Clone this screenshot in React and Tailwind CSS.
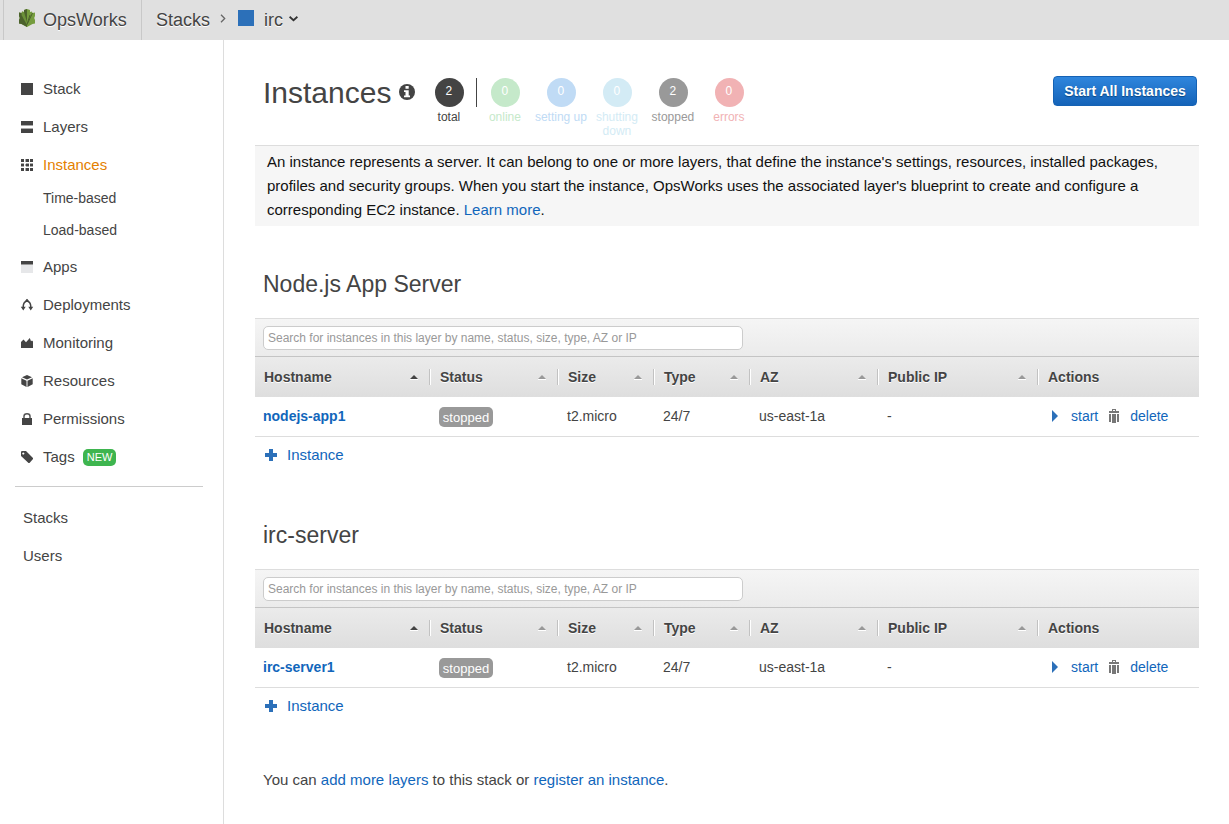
import React from "react";

function Leaf() {
  return (
    <svg className="block h-[18px] w-[16px]" viewBox="0 0 16 18">
      <path
        d="M8 0 5 1v2L3 2.500 2.500 4 0 3.500V7l.8 2L0 11v3.500l2.500.5L8 18l5.500-3 2.500-.5V11l-.8-2L16 7V3.500L13.500 4 13 2.500 11 3V1z"
        fill="#759c3e"
      />
      <path d="M8 0 5 1v8l3 6zM0 3.500 2.500 4 8 15v3L2.500 15 0 14.500V11l.8-2L0 7z" fill="#4b612c" />
      <path d="M3 2.500 5 3l3 10v3L2.500 6z" fill="#6b9139" />
      <path d="M13.500 4 8 15.500 11 6" fill="none" stroke="#4b612c" strokeWidth="1" />
    </svg>
  );
}

function Icon({ children }) {
  return (
    <svg className="block size-3 shrink-0 overflow-visible" viewBox="0 0 12 12" fill="#444">
      {children}
    </svg>
  );
}

const icons = {
  stack: <rect width="12" height="12" />,
  layers: (
    <>
      <rect width="12" height="4" />
      <rect y="4" width="12" height="1" fill="#aaa" />
      <rect y="7" width="12" height="1" fill="#aaa" />
      <rect y="8" width="12" height="4" />
    </>
  ),
  instances: (
    <>
      <path d="M0 0h3v3H0zM5 0h3v3H5zM9 0h3v3H9zM0 5h3v2H0zM5 5h3v2H5zM9 5h3v2H9zM0 9h3v3H0zM5 9h3v3H5zM9 9h3v3H9z" />
      <path d="M0 4h3v1H0zM5 4h3v1H5zM9 4h3v1H9zM0 7h3v1H0zM5 7h3v1H5zM9 7h3v1H9zM4 0h1v3H4zM4 9h1v3H4zM4 5h1v2H4z" fill="#aaa" />
    </>
  ),
  apps: (
    <>
      <rect width="12" height="3" />
      <rect y="3" width="12" height="1" fill="#999" />
      <rect y="4" width="12" height="8" fill="#e6e7e9" />
    </>
  ),
  deployments: (
    <>
      <path d="M6 .8 4.500 2.800C2.800 3.500 2.200 5 2.200 8.500M6 .8 7.500 2.800C9.200 3.500 9.800 5 9.800 8.500" fill="none" stroke="#444" strokeWidth="1.500" />
      <path d="M6-.2 8.200 3H3.800zM-.2 7.700h4.900L2.250 11.500zM7.300 7.700h4.900L9.750 11.500z" />
    </>
  ),
  monitoring: <path d="M0 11V5l2.500-2.500L5 5.200 8.800 1l1.200 3.200L11 3.600l1 1V11z" />,
  resources: (
    <>
      <path d="M6 0l5 2.200L6 4.600 1 2.200zM.3 3.200 5.500 5.700V12L.3 9.200z" />
      <path d="M11.700 3.200 6.500 5.700V12l5.200-2.800z" />
      <path d="M5.500 6h1v6h-1z" fill="#999" />
    </>
  ),
  permissions: (
    <>
      <path d="M3 6V3.200C3 1.500 4.200.8 6 .8s3 .7 3 2.400V6" fill="none" stroke="#555" strokeWidth="1.500" />
      <rect x="1" y="5" width="10" height="7" />
    </>
  ),
  tags: <path fillRule="evenodd" d="M0 .8.8 0H5l7 7v1l-3.500 4h-1L0 5zM2.300 1.400a1.100 1.100 0 1 0 .01 0z" />,
};

function NavItem({ icon, label, active, badge }) {
  return (
    <a className="flex h-[38px] items-center pl-[21px]">
      <Icon>{icons[icon]}</Icon>
      <span className={active ? "ml-2.5 text-[#e47f00]" : "ml-2.5"}>{label}</span>
      {badge && (
        <span className="ml-2 h-[17px] rounded-[5px] bg-[#3eb54f] px-1 text-[11px] leading-[17px] text-white">
          {badge}
        </span>
      )}
    </a>
  );
}

function Sidebar() {
  return (
    <nav className="w-[224px] shrink-0 border-r border-[#ddd] pt-[30px] text-[15px]">
      <NavItem icon="stack" label="Stack" />
      <NavItem icon="layers" label="Layers" />
      <NavItem icon="instances" label="Instances" active />
      <div className="-mt-0.5 mb-0.5 pl-[43px] text-sm leading-8">
        <div>Time-based</div>
        <div>Load-based</div>
      </div>
      <NavItem icon="apps" label="Apps" />
      <NavItem icon="deployments" label="Deployments" />
      <NavItem icon="monitoring" label="Monitoring" />
      <NavItem icon="resources" label="Resources" />
      <NavItem icon="permissions" label="Permissions" />
      <NavItem icon="tags" label="Tags" badge="NEW" />
      <div className="mt-2.5 mr-5 mb-3 ml-[15px] h-px bg-[#ccc]" />
      <div className="pl-[23px] leading-[38px]">
        <div>Stacks</div>
        <div>Users</div>
      </div>
    </nav>
  );
}

function TopBar() {
  return (
    <header className="flex h-10 bg-[#e0e0e0] pl-[3px] text-lg leading-10 [text-shadow:0_1px_0_#fff]">
      <div className="flex w-[139px] border-x border-[#c8c8c8] pl-[15px]">
        <div className="mt-[9px]">
          <Leaf />
        </div>
        <span className="ml-2">OpsWorks</span>
      </div>
      <span className="ml-[14px]">Stacks</span>
      <svg className="mt-[14px] ml-[10px] h-[9px] w-[6px]" viewBox="0 0 6 9">
        <path d="M1 .8 4.700 4.500 1 8.200" fill="none" stroke="#666" strokeWidth="1.300" />
      </svg>
      <div className="mt-[10px] ml-3 size-4 bg-[#2c70b9]" />
      <span className="ml-[10px]">irc</span>
      <svg className="mt-4 ml-1.5 h-[6px] w-[9px]" viewBox="0 0 9 6">
        <path d="M.6.8 4.500 4.200 8.400.8" fill="none" stroke="#333" strokeWidth="1.800" />
      </svg>
    </header>
  );
}

const counters = [
  { n: 0, label: "online", circle: "bg-[#c5e9ca]", text: "text-[#c5e9ca]" },
  { n: 0, label: "setting up", circle: "bg-[#c0dbf5]", text: "text-[#c0dbf5]" },
  { n: 0, label: "shutting down", circle: "bg-[#d3ebf5]", text: "text-[#d3ebf5]" },
  { n: 2, label: "stopped", circle: "bg-[#999]", text: "text-[#999]" },
  { n: 0, label: "errors", circle: "bg-[#f1b2b4]", text: "text-[#f1b2b4]" },
];

function Counter({ n, label, circle, text }) {
  return (
    <div className={"flex w-14 flex-col items-center text-center text-xs leading-[14px] " + text}>
      <div className={"h-[29px] w-[29px] shrink-0 rounded-full pr-px leading-[27px] text-white " + circle}>{n}</div>
      <div className="mt-[3px] pr-px">{label}</div>
    </div>
  );
}

const columns = ["Hostname", "Status", "Size", "Type", "AZ", "Public IP", "Actions"];
const grid = "grid grid-cols-[176px_128px_96px_96px_128px_160px_160px]";

function HeaderCell({ label, sorted, last }) {
  return (
    <div className="flex items-center justify-between pl-[9px]">
      <span>{label}</span>
      {!last && (
        <div className="flex items-center">
          <svg className="mr-[11px] h-[5px] w-2" viewBox="0 0 8 5">
            <path d="M0 5h8v-1H0z" fill="#fff" />
            <path d="M0 4 4 0l4 4z" fill={sorted ? "#444" : "#999"} />
          </svg>
          <div className="h-4 w-0.5 border-r border-l border-r-white border-l-[#c2c2c2]" />
        </div>
      )}
    </div>
  );
}

function LayerTable({ title, host }) {
  return (
    <section className="h-[251px]">
      <h2 className="h-[52px] pl-2 text-[23px] leading-9">{title}</h2>
      <div className="h-[39px] border-t border-b border-t-[#ddd] border-b-[#c4c4c4] bg-linear-to-b from-[#f5f5f5] to-[#ebebeb] pt-[7px] pl-2">
        <input
          className="block h-6 w-[480px] rounded-[5px] border border-[#ccc] bg-white px-1 text-xs placeholder:text-[#999]"
          placeholder="Search for instances in this layer by name, status, size, type, AZ or IP"
        />
      </div>
      <div className={grid + " h-10 bg-linear-to-b from-[#ebebeb] to-[#dedede] text-sm font-bold [text-shadow:0_1px_0_#fff]"}>
        {columns.map((c, i) => (
          <HeaderCell key={c} label={c} sorted={i === 0} last={i === 6} />
        ))}
      </div>
      <div className={grid + " h-10 border-b border-[#ddd] text-sm leading-[39px] *:pl-2"}>
        <a className="font-bold text-[#1166bb]">{host}</a>
        <div className="pt-[10px]">
          <span className="block h-5 w-[54px] rounded-[5px] bg-[#999] text-center text-[13px] leading-[21px] text-white">
            stopped
          </span>
        </div>
        <div>t2.micro</div>
        <div>24/7</div>
        <div>us-east-1a</div>
        <div>-</div>
        <div className="flex items-center text-[#1166bb]">
          <svg className="mb-[1px] ml-[5px] h-3 w-1.5" viewBox="0 0 6 12">
            <path d="M0 0l6 6-6 6z" fill="#2c70b9" />
          </svg>
          <span className="ml-[13px]">start</span>
          <svg className="mb-[1px] ml-[11px] h-[14px] w-[10px]" viewBox="0 0 10 14" fill="#777">
            <path d="M3 0h4v1H3zM3 1h1v1H3zM6 1h1v1H6zM0 2h10v2H0zM0 5h2v8H0zM3 5h4v9H3zM8 5h2v8H8z" />
          </svg>
          <span className="ml-[11px]">delete</span>
        </div>
      </div>
      <a className="flex h-9 items-center pl-[10px] text-[15px] text-[#1166bb]">
        <svg className="h-3 w-3" viewBox="0 0 12 12">
          <path d="M4 0h4v4h4v4H8v4H4V8H0V4h4z" fill="#2c70b9" />
        </svg>
        <span className="ml-[10px]">Instance</span>
      </a>
    </section>
  );
}

function Main() {
  return (
    <main className="w-[975px] pl-[31px]">
      <div className="flex h-[105px] pl-2">
        <h1 className="mt-[33px] text-[30px] leading-10">Instances</h1>
        <svg className="mt-11 ml-2 h-4 w-4" viewBox="0 0 16 16">
          <circle cx="8" cy="8" r="8" fill="#444" />
          <path d="M6.500 2h3.200v2.800H6.500zM5 6.200h4.700V11.500H11V13.300H5V11.500h1.500V8H5z" fill="#fff" />
        </svg>
        <div className="mt-[38px] ml-1.5 flex">
          <Counter n={2} label="total" circle="bg-[#444]" text="text-[#444]" />
          <div className="-ml-px h-[29px] w-px bg-[#444]" />
          {counters.map((c) => (
            <Counter key={c.label} {...c} />
          ))}
        </div>
        <button className="mt-9 mr-0.5 ml-auto h-[30px] w-36 rounded-[4px] border border-[#1562b4] bg-linear-to-b from-[#2f86dd] to-[#1463b8] text-sm font-bold whitespace-nowrap text-white [text-shadow:0_1px_1px_#0a4580]">
          Start All Instances
        </button>
      </div>
      <p className="mb-10 h-[81px] border-t border-[#ddd] bg-[#f6f6f6] pt-1 pl-3 text-[15px] leading-6 text-[#111]">
        An instance represents a server. It can belong to one or more layers, that define the instance's settings,
        resources, installed packages,
        <br />
        profiles and security groups. When you start the instance, OpsWorks uses the associated layer's blueprint to
        create and configure a
        <br />
        corresponding EC2 instance. <a className="text-[#1166bb]">Learn more</a>.
      </p>
      <LayerTable title="Node.js App Server" host="nodejs-app1" />
      <LayerTable title="irc-server" host="irc-server1" />
      <p className="pl-2 text-[15px] leading-6">
        You can <a className="text-[#1166bb]">add more layers</a> to this stack or{" "}
        <a className="text-[#1166bb]">register an instance</a>.
      </p>
    </main>
  );
}

export default function App() {
  return (
    <div className="flex h-[824px] flex-col overflow-hidden bg-white font-['Liberation_Sans',Arial,sans-serif] text-[#444]">
      <TopBar />
      <div className="flex min-h-0 flex-1">
        <Sidebar />
        <Main />
      </div>
    </div>
  );
}
